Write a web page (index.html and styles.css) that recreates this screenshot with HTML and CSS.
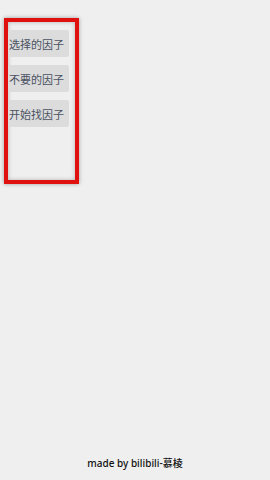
FILE: index.html
```html
<!DOCTYPE html>
<html lang="zh">
<head>
    <meta charset="UTF-8">
    <meta name="viewport" content="width=device-width, initial-scale=1.0">
    <title>找因子</title>
    <link rel="stylesheet" href="styles.css">
</head>
<body>
    <div class="panel">
        <button class="factor-button">选择的因子</button>
        <button class="factor-button">不要的因子</button>
        <button class="factor-button">开始找因子</button>
    </div>

    <div class="footer">made by bilibili-慕棱</div>
</body>
</html>
```

FILE: styles.css
```css
body {
    margin: 0;
    padding: 0;
    height: 480px;
    background-color: #efefef;
    font-family: "Noto Sans", "Noto Sans CJK SC", sans-serif;
    display: flex;
    flex-direction: column;
}

.panel {
    box-sizing: border-box;
    width: 75px;
    height: 166px;
    margin: 18px 0 0 4px;
    padding-top: 8px;
    border: 4px solid #e0100f;
    box-shadow: 0 0 4px rgba(0, 0, 0, 0.35), inset 0 0 4px rgba(0, 0, 0, 0.25);
    display: flex;
    flex-direction: column;
    align-items: flex-start;
    gap: 8px;
}

.factor-button {
    box-sizing: border-box;
    width: 61px;
    height: 27px;
    padding: 0 0 0 1px;
    border: none;
    border-radius: 2px;
    background-color: #dcdcdc;
    color: #4a5262;
    font-family: "Noto Sans CJK SC", sans-serif;
    font-size: 11px;
    text-align: left;
    white-space: nowrap;
}

.footer {
    margin-top: auto;
    margin-bottom: 10px;
    text-align: center;
    font-size: 10px;
    font-weight: 500;
    color: #111;
    font-family: "Noto Sans", "Noto Sans CJK SC", sans-serif;
}
```
